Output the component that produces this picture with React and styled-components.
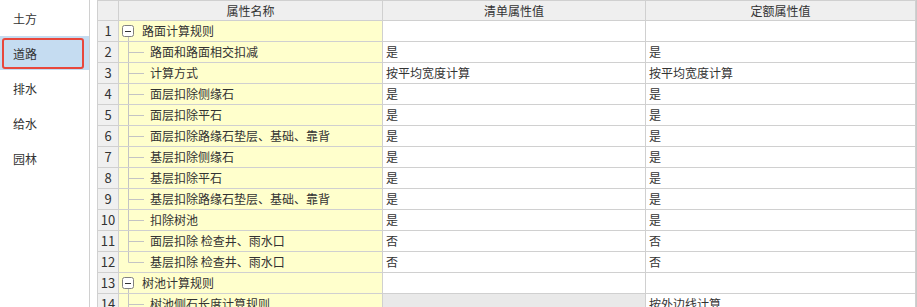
import React from "react";
import styled, { createGlobalStyle } from "styled-components";

const Global = createGlobalStyle`
  html, body { margin: 0; padding: 0; background: #fff; }
  body { font-family: "Noto Sans CJK SC", "Noto Sans", sans-serif; font-size: 12px; color: #333; }
`;

const Page = styled.div`
  display: flex;
  width: 917px;
  height: 307px;
  overflow: hidden;
  background: #fff;
`;

const Sidebar = styled.div`
  width: 89px;
  flex: none;
  border-right: 1px solid #d0d0d0;
  padding-top: 1px;
  display: flex;
  flex-direction: column;
  gap: 1px;
`;

const NavItem = styled.div`
  height: 34px;
  box-sizing: border-box;
  padding: ${(p) => (p.$active ? "2px 5px 1px 2px" : "0")};
  background: ${(p) => (p.$active ? "#c5dcf1" : "transparent")};
  display: flex;
`;

const NavLabel = styled.span`
  flex: 1;
  display: flex;
  align-items: center;
  box-sizing: border-box;
  padding-left: ${(p) => (p.$active ? "9px" : "13px")};
  border: ${(p) => (p.$active ? "2px solid #e8473c" : "none")};
  border-radius: 3px;
  color: #333;
  font-size: 12px;
`;

const Gap = styled.div`
  width: 7px;
  flex: none;
`;

const Grid = styled.div`
  flex: none;
  width: 819px;
  border-left: 1px solid #d0d0d0;
  border-top: 1px solid #d0d0d0;
  box-sizing: border-box;
  display: grid;
  grid-template-columns: 21px 264px 263px 270px;
  grid-template-rows: 20px;
  grid-auto-rows: 21px;
  align-content: start;
`;

const Edge = styled.div`
  flex: 1;
  background: #c9c9c9;
`;

const Cell = styled.div`
  box-sizing: border-box;
  border-right: 1px solid #d0d0d0;
  border-bottom: 1px solid #d0d0d0;
  height: 21px;
  line-height: 20px;
  white-space: nowrap;
  overflow: hidden;
  display: flex;
  align-items: center;
`;

const HeadCell = styled(Cell)`
  height: 20px;
  background: #efefef;
  justify-content: center;
  color: #333;
`;

const NumCell = styled(Cell)`
  background: #f0f0f0;
  justify-content: center;
  font-size: 13px;
  color: #333;
`;

const NameCell = styled(Cell)`
  background: #ffffcc;
  color: #333;
`;

const ValueCell = styled(Cell)`
  background: ${(p) => (p.$disabled ? "#e9e9e9" : "#fff")};
  padding-left: 3px;
  color: #333;
`;

const TreeSvg = styled.svg`
  flex: none;
  display: block;
`;

const Row = styled.div`
  display: contents;
`;

const GUIDE = "#c4c4c4";

function TreeGuide({ kind }) {
  if (kind === "group") {
    return (
      <TreeSvg width="23" height="20" viewBox="0 0 23 20">
        <rect x="3.5" y="4.5" width="11" height="11" rx="2" fill="#fff" stroke="#808080" />
        <line x1="6" y1="10.5" x2="12" y2="10.5" stroke="#333" />
        <line x1="9.5" y1="16" x2="9.5" y2="20" stroke={GUIDE} />
      </TreeSvg>
    );
  }
  return (
    <TreeSvg width="31" height="20" viewBox="0 0 31 20">
      <line x1="9.5" y1="0" x2="9.5" y2={kind === "last" ? 10.5 : 20} stroke={GUIDE} />
      <line x1="9.5" y1="10.5" x2="25" y2="10.5" stroke={GUIDE} />
    </TreeSvg>
  );
}

const rows = [
  { n: 1, name: "路面计算规则", kind: "group", a: "", b: "" },
  { n: 2, name: "路面和路面相交扣减", a: "是", b: "是" },
  { n: 3, name: "计算方式", a: "按平均宽度计算", b: "按平均宽度计算" },
  { n: 4, name: "面层扣除侧缘石", a: "是", b: "是" },
  { n: 5, name: "面层扣除平石", a: "是", b: "是" },
  { n: 6, name: "面层扣除路缘石垫层、基础、靠背", a: "是", b: "是" },
  { n: 7, name: "基层扣除侧缘石", a: "是", b: "是" },
  { n: 8, name: "基层扣除平石", a: "是", b: "是" },
  { n: 9, name: "基层扣除路缘石垫层、基础、靠背", a: "是", b: "是" },
  { n: 10, name: "扣除树池", a: "是", b: "是" },
  { n: 11, name: "面层扣除 检查井、雨水口", a: "否", b: "否" },
  { n: 12, name: "基层扣除 检查井、雨水口", kind: "last", a: "否", b: "否" },
  { n: 13, name: "树池计算规则", kind: "group", a: "", b: "" },
  { n: 14, name: "树池侧石长度计算规则", a: "", b: "按外边线计算", disabledA: true },
];

const nav = ["土方", "道路", "排水", "给水", "园林"];

export default function App() {
  return (
    <>
      <Global />
      <Page>
        <Sidebar>
          {nav.map((t) => (
            <NavItem key={t} $active={t === "道路"}>
              <NavLabel $active={t === "道路"}>{t}</NavLabel>
            </NavItem>
          ))}
        </Sidebar>
        <Gap />
        <Grid>
          <Row>
            <HeadCell />
            <HeadCell>属性名称</HeadCell>
            <HeadCell>清单属性值</HeadCell>
            <HeadCell>定额属性值</HeadCell>
          </Row>
          {rows.map((r) => (
            <Row key={r.n}>
              <NumCell>{r.n}</NumCell>
              <NameCell>
                <TreeGuide kind={r.kind || "child"} />
                <span>{r.name}</span>
              </NameCell>
              <ValueCell $disabled={r.disabledA}>{r.a}</ValueCell>
              <ValueCell>{r.b}</ValueCell>
            </Row>
          ))}
        </Grid>
        <Edge />
      </Page>
    </>
  );
}
